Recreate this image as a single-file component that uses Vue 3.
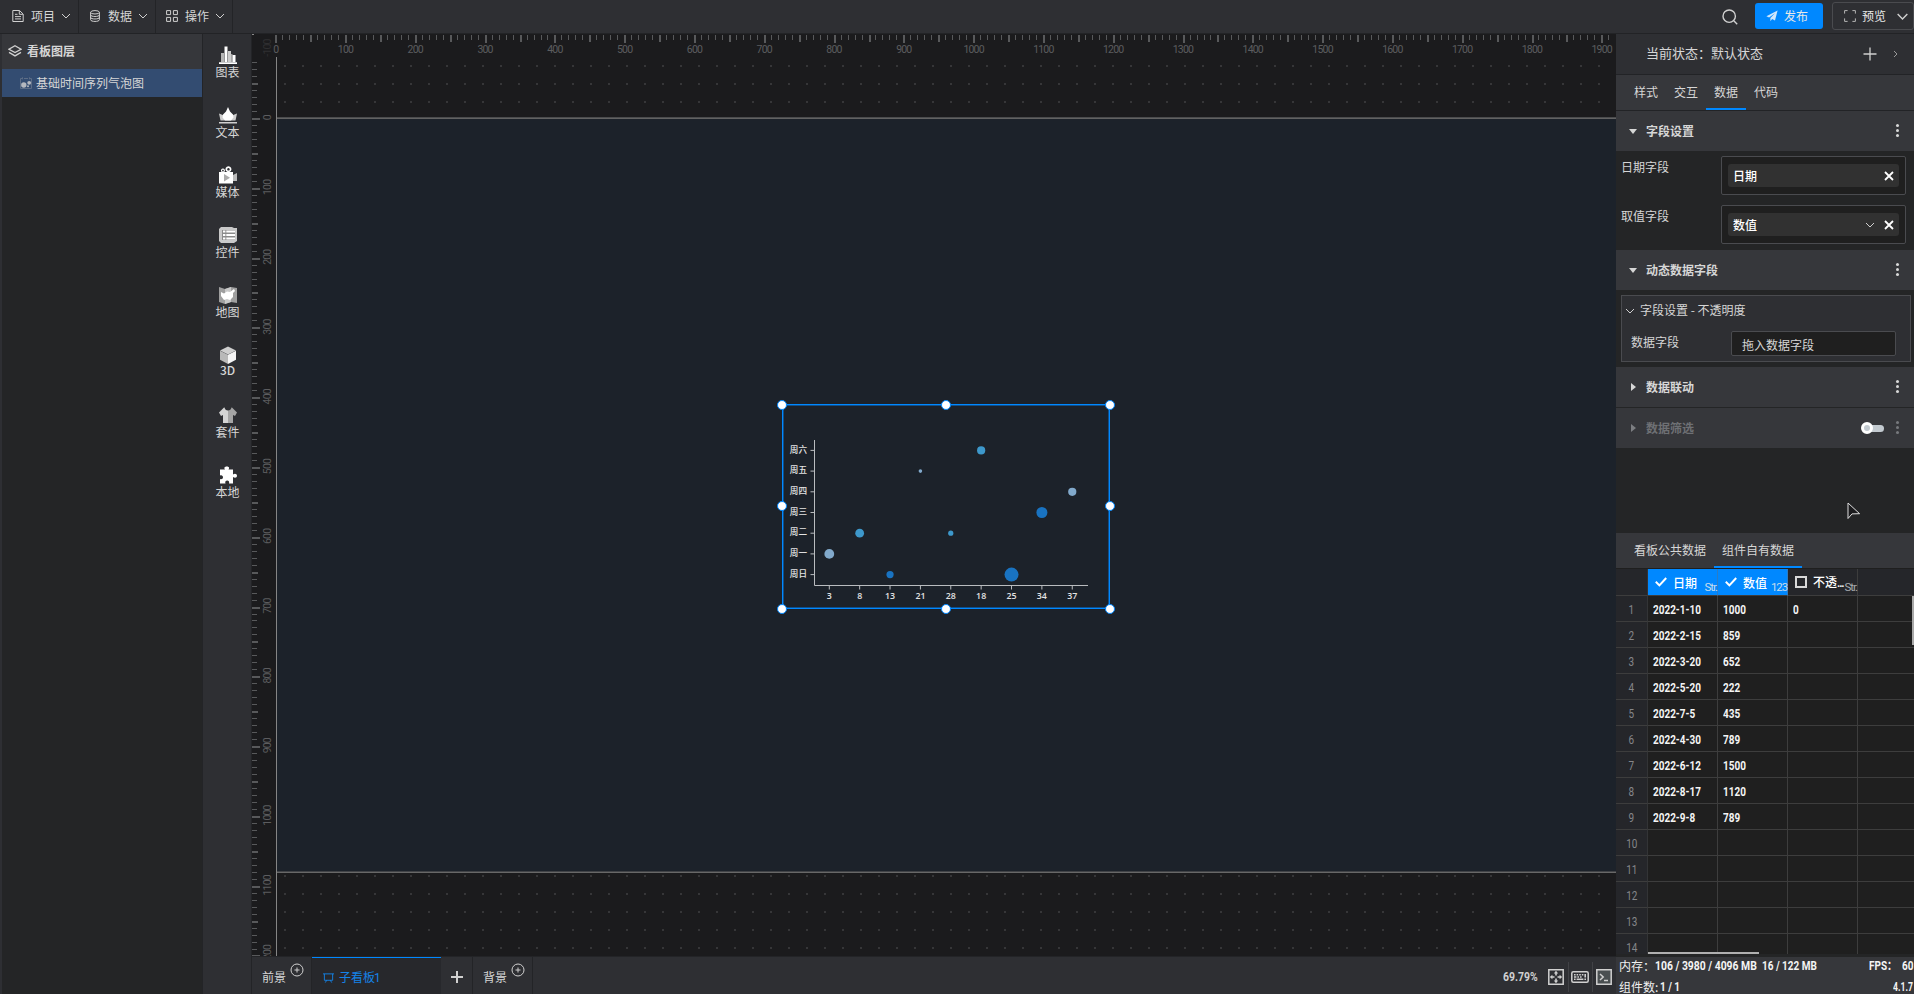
<template>
  <div class="editor">
    <header class="topbar">
      <div class="menu" v-for="m in menus" :key="m.label">
        <svg class="menu-icon" viewBox="0 0 12 12">
          <template v-if="m.icon === 'file'">
            <path d="M.8.5h6.7l3.7 3.6v7.4H.8z M7.3.7v3.6h3.6 M3 4.3h2.5 M3 6.6h6 M3 8.9h6" />
          </template>
          <template v-else-if="m.icon === 'db'">
            <ellipse cx="6" cy="2.3" rx="4.4" ry="1.7" />
            <path d="M1.6 2.3v7.4c0 2.3 8.8 2.3 8.8 0V2.3 M1.6 4.9c0 2.1 8.8 2.1 8.8 0 M1.6 7.4c0 2.1 8.8 2.1 8.8 0" />
          </template>
          <template v-else>
            <path d="M.6.6h4v4h-4z M7.4.6h4v4h-4z M.6 7.4h4v4h-4z M7.4 7.4h4v4h-4z" />
          </template>
        </svg>
        <span>{{ m.label }}</span>
        <svg class="chev" viewBox="0 0 10 6"><path d="M1 1l4 4 4-4" /></svg>
      </div>
      <div class="top-right">
        <svg class="search" viewBox="0 0 16 16"><circle cx="7.2" cy="7.2" r="6.2" /><path d="M11.8 11.8l3.4 3.4" /></svg>
        <button class="publish">
          <svg viewBox="0 0 12 12"><path d="M11.6.4L.4 6.2l2.7 1.3L8.9 3.2 4.4 8v3.3l1.7-2.2 2.9 1.3z" /></svg>
          发布
        </button>
        <button class="preview">
          <svg class="frame" viewBox="0 0 12 12"><path d="M.6 3.6v-3h3 M8.4.6h3v3 M11.4 8.4v3h-3 M3.6 11.4h-3v-3" /></svg>
          <span>预览</span>
          <svg class="chev big" viewBox="0 0 10 6"><path d="M.6.8L5 5.2 9.4.8" /></svg>
        </button>
      </div>
    </header>

    <div class="main">
      <aside class="layers">
        <div class="layers-title">
          <svg viewBox="0 0 14 12"><path d="M7 .8l6 3.4-6 3.4-6-3.4z M1 7.4l6 3.5 6-3.5" /></svg>
          看板图层
        </div>
        <div class="layer-row">
          <svg viewBox="0 0 12 12">
            <path class="dim" d="M.5 11.5V1.5H2 M4 1.5h4 M10 1.5h1.5v10H.5 M2.5.3v2 M9.5.3v2" />
            <circle cx="3.8" cy="8" r="2.7" /><circle cx="9.2" cy="5.8" r="1.9" /><circle cx="8" cy="9.3" r="1" />
          </svg>
          基础时间序列气泡图
        </div>
      </aside>

      <nav class="tools">
        <div class="tool" v-for="t in tools" :key="t.label" :class="{ latin: t.label === '3D' }">
          <svg viewBox="0 0 18 18">
            <path v-for="(p, i) in t.paths" :key="i" :d="p[1]" :fill="p[0]" />
          </svg>
          <span>{{ t.label }}</span>
        </div>
      </nav>

      <section class="center">
        <div class="canvas">
          <svg class="stage" width="1364" height="923">
            <defs>
              <pattern id="dots" x="32" y="31" width="18" height="18" patternUnits="userSpaceOnUse">
                <rect width="2" height="2" fill="#363638" />
              </pattern>
            </defs>
            <rect x="25" y="23" width="1339" height="900" fill="url(#dots)" />
            <rect x="25" y="84" width="1339" height="754" fill="#1c222a" />
            <rect x="24" y="83" width="1340" height="1" fill="#4a4b4d" />
            <rect x="24" y="84" width="1340" height="1" fill="#626262" />
            <rect x="24" y="837" width="1340" height="1" fill="#414347" />
            <rect x="24" y="838" width="1340" height="1" fill="#686868" />
            <rect x="24" y="23" width="1" height="900" fill="#858585" />
            <rect
              v-for="t in hTicks" :key="'h' + t.n"
              :x="t.pos" y="1" :width="t.w" :height="t.len" fill="#58595b"
            />
            <rect
              v-for="t in vTicks" :key="'v' + t.n"
              x="0" :y="t.pos" :width="t.len" :height="t.w" fill="#58595b"
            />
            <text v-for="n in hLabels" :key="'hl' + n" class="rule" :x="23.7 + n * 0.6979" y="19">{{ n }}</text>
            <text
              v-for="n in vLabels" :key="'vl' + n" class="rule"
              :transform="`translate(18.5 ${83.6 + n * 0.6979}) rotate(-90)`"
            >{{ n }}</text>
            <text class="rule faint" transform="translate(18.5 14) rotate(-90)">-100</text>
            <rect x="0" y="-1" width="2" height="2" fill="#8a8a8a" />
          </svg>

          <div class="widget">
            <svg class="chart" width="328" height="205">
              <path class="axis" d="M32.5 36V181.5H306" />
              <g v-for="(d, i) in weekdays" :key="d">
                <path class="axis" :d="`M28.5 ${dayY(i)}h4`" />
                <text class="day" x="25" :y="dayY(i) + 2.2">{{ d }}</text>
              </g>
              <g v-for="(b, i) in bubbles" :key="i">
                <path class="axis" :d="`M${bubbleX(i)} 181.5v4`" />
                <text class="num" :x="bubbleX(i)" y="194.6">{{ b.label }}</text>
                <circle :cx="bubbleX(i)" :cy="dayY(b.day)" :r="b.r" :fill="b.color" />
              </g>
            </svg>
            <i v-for="h in handles" :key="h" class="handle" :class="h"></i>
          </div>
        </div>

        <footer class="boards">
          <div class="board-cell">前景<svg class="add" viewBox="0 0 14 14"><circle cx="7" cy="7" r="6" /><path d="M7 4.5v5M4.5 7h5" /></svg></div>
          <div class="board-tab">
            <svg viewBox="0 0 12 12"><path d="M0 1.5h12 M1.5 1.5v7h9v-7 M4 8.5l-1.5 2.5 M8 8.5l1.5 2.5" /></svg>
            <span>子看板<span class="one">1</span></span>
          </div>
          <div class="board-plus"><svg viewBox="0 0 12 12"><path d="M6 0v12M0 6h12" /></svg></div>
          <div class="board-cell">背景<svg class="add" viewBox="0 0 14 14"><circle cx="7" cy="7" r="6" /><path d="M7 4.5v5M4.5 7h5" /></svg></div>
          <div class="zoom">
            <span class="din pct">69.79%</span>
            <span class="zoom-btn first">
              <svg width="16" height="16" viewBox="0 0 16 16">
                <path class="ln" d="M.8.8h14.4v14.4H.8z" />
                <path class="fl" d="M8 1.8l2.2 2.6H8.8v2.1H7.2V4.4H5.8z M8 14.2l2.2-2.6H8.8V9.5H7.2v2.1H5.8z M1.8 8l2.6-2.2v1.4h2.1v1.6H4.4v1.4z M14.2 8l-2.6-2.2v1.4H9.5v1.6h2.1v1.4z" />
              </svg>
            </span>
            <span class="zoom-btn">
              <svg width="18" height="12" viewBox="0 0 18 12">
                <rect class="ln" x=".8" y=".8" width="16.4" height="10.4" rx="1.5" />
                <path class="fl" d="M3 3h1.6v1.6H3z M5.6 3h1.6v1.6H5.6z M8.2 3h1.6v1.6H8.2z M10.8 3h1.6v1.6h-1.6z M13.4 3H15v3.6h-1.6z M3 5.3h2.4v1.4H3z M6.4 5.3H8v1.4H6.4z M9 5.3h1.6v1.4H9z M3 7.6h1.6V9H3z M5.6 7.6h6.8V9H5.6z M13.4 7.6H15V9h-1.6z" />
              </svg>
            </span>
            <span class="zoom-btn">
              <svg width="16" height="16" viewBox="0 0 16 16">
                <path class="ln filled" d="M.8.8h14.4v14.4H.8z" /><path class="ln" d="M4 5l3.2 3L4 11 M8 11.5h4" />
              </svg>
            </span>
          </div>
        </footer>
      </section>

      <aside class="props">
        <div class="state">
          <span>当前状态：默认状态</span>
          <svg class="plus" viewBox="0 0 14 14"><path d="M7 .5v13M.5 7h13" /></svg>
          <svg class="arrow" viewBox="0 0 5 8"><path d="M1 1l3 3-3 3" /></svg>
        </div>
        <div class="tabs">
          <span v-for="t in tabs" :key="t" class="tab" :class="{ active: t === '数据' }">{{ t }}</span>
        </div>

        <div class="group"><i class="tri down"></i>字段设置<i class="more"></i></div>
        <div class="fields">
          <div class="field">
            <label>日期字段</label>
            <div class="drop"><div class="chip">日期<svg class="x" viewBox="0 0 10 10"><path d="M1 1l8 8M9 1L1 9" /></svg></div></div>
          </div>
          <div class="field">
            <label>取值字段</label>
            <div class="drop"><div class="chip">数值<svg class="chev" viewBox="0 0 10 6"><path d="M1 1l4 4 4-4" /></svg><svg class="x" viewBox="0 0 10 10"><path d="M1 1l8 8M9 1L1 9" /></svg></div></div>
          </div>
        </div>

        <div class="group"><i class="tri down"></i>动态数据字段<i class="more"></i></div>
        <div class="dynamic">
          <div class="dyn-box">
            <div class="dyn-title"><svg class="chev" viewBox="0 0 10 6"><path d="M1 1l4 4 4-4" /></svg>字段设置 - 不透明度</div>
            <div class="dyn-row"><label>数据字段</label><div class="dyn-input">拖入数据字段</div></div>
          </div>
        </div>

        <div class="group"><i class="tri"></i>数据联动<i class="more"></i></div>
        <div class="group off"><i class="tri"></i>数据筛选<i class="switch"></i><i class="more"></i></div>
        <div class="blank"></div>

        <div class="data-tabs">
          <span>看板公共数据</span>
          <span class="active">组件自有数据</span>
        </div>
        <div class="sheet">
          <div class="sheet-head">
            <div class="idx"></div>
            <div class="col on"><svg class="check" viewBox="0 0 12 10"><path d="M.8 4.8l3.6 3.6L11.2 1" /></svg><b>日期</b><em>Str.</em></div>
            <div class="col on"><svg class="check" viewBox="0 0 12 10"><path d="M.8 4.8l3.6 3.6L11.2 1" /></svg><b>数值</b><em>123</em></div>
            <div class="col"><i class="box"></i><b>不透<span class="dots">...</span></b><em>Str.</em></div>
            <div class="rest"></div>
          </div>
          <div class="sheet-row" v-for="(r, i) in rows" :key="i">
            <div class="idx"><span class="din thin">{{ i + 1 }}</span></div>
            <div class="col" v-for="c in 3" :key="c"><span class="din">{{ r[c - 1] }}</span></div>
            <div class="rest"></div>
          </div>
          <div class="bar-v"></div>
          <div class="bar-h"></div>
        </div>
        <div class="status">
          <div class="status-line">
            <span>内存：</span><span class="din mem">106 / 3980 / 4096 MB</span><span class="din mem2">16 / 122 MB</span>
            <span class="right"><span class="din fps">FPS：</span><span class="din sixty">60</span></span>
          </div>
          <div class="status-line">
            <span>组件数:</span><span class="din cnt">1 / 1</span>
            <span class="right"><span class="din ver">4.1.7</span></span>
          </div>
        </div>
      </aside>
    </div>

    <svg class="cursor" viewBox="0 0 14 18"><path d="M1 1v15.5l4-4.6 7.6-.2z" /></svg>
  </div>
</template>

<script setup>
const menus = [
  { label: '项目', icon: 'file' },
  { label: '数据', icon: 'db' },
  { label: '操作', icon: 'grid' },
]

const tabs = ['样式', '交互', '数据', '代码']

const tools = [
  { label: '图表', paths: [['#b5b5b5', 'M2 7h3v9H2z'], ['#fff', 'M5.5.5h3V16h-3z'], ['#ccc', 'M9 5h3v11H9z'], ['#a5a5a5', 'M12 8h1.5v8H12z'], ['#fff', 'M13.5 9h3v7h-3z M0 16.300h18V18H0z']] },
  { label: '文本', paths: [['#cfcfcf', 'M0 7.5l5 2h8l5-2-1.5 7h-15z M0 16h18v1.5H0z'], ['#fff', 'M9 1l2 4.5 3 3 .5 3-2.500 3H6l-2.5-3 .5-3 3-3z']] },
  { label: '媒体', paths: [['#bbb', 'M14 9l4-2v8h-4z'], ['#fff', 'M9.5.2a3 3 0 1 1-.1 0z M4 2.5a2 2 0 1 1-.1 0z M0 6h14v11.5H0z'], ['#2e2f33', 'M9.5 2a1.3 1.3 0 1 1-.1 0z M4 3.7a.8.8 0 1 1-.1 0z'], ['#aaa', 'M5 8l6 3.7-6 3.8z']] },
  { label: '控件', paths: [['#c9c9c9', 'M2 1h11l2 1h3v13l-3 2H2l-2-2V3z'], ['#8b8b8b', 'M3 4h13v10H3z'], ['#fff', 'M4 4.5h2.4v2H4z M7.3 4.5H16v2H7.3z M4 8h2.4v2H4z M7.3 8H16v2H7.3z M4 11.5h2.4v2H4z M7.3 11.5H16v2H7.3z']] },
  { label: '地图', paths: [['#9f9f9f', 'M0 1l6 2 6-2 6 1v15l-6-1-6 2-6-2z'], ['#c8c8c8', 'M6 3l6-2v15l-6 2z'], ['#fff', 'M2 6l3 1.5 3-2 3 .5 4-3 1 2-2 2v4l-3 3-3-1-3 1-3-4z']] },
  { label: '3D', paths: [['#cfcfcf', 'M9 .5l8 4-8 4-8-4z'], ['#f5f5f5', 'M9 8.8l8-4.1v9l-8 4.3z'], ['#b9b9b9', 'M1 4.7l8 4.1V18l-8-4.3z']] },
  { label: '套件', paths: [['#d4d4d4', 'M5 1.5L0 6.5l2 3.5 2-1v8h5V4.5C7 4.5 6 3.5 5.5 1.5z'], ['#a5a5a5', 'M13 1.5l5 5-2 3.5-2-1v8H9V4.5c2 0 3-1 3.5-3z']] },
  { label: '本地', paths: [['#fff', 'M1 3.5h5C4.5 1.5 6 .5 7.8.5s3.2 1 1.7 3H14v5c2-1.3 4-.5 4 1.3s-2 2.7-4 1.2v6.5h-4c.7-2-.5-3-1.8-3s-2.5 1-1.7 3H1V13c1.8.8 3-.5 3-1.8S2.8 8.6 1 9.5z']] },
]

// 1 board unit = 0.6979px at the current zoom
const STEP = 6.979
const tick = (n, zero) => ({
  n,
  pos: Math.round(zero + n * STEP),
  len: n % 10 === 0 ? 8 : n % 5 === 0 ? 7 : 5,
  w: n % 5 === 0 ? 2 : 1,
})
const hTicks = Array.from({ length: 192 }, (_, n) => tick(n, 23.3))
const vTicks = Array.from({ length: 129 }, (_, i) => tick(i - 8, 84)).map(t => ({
  ...t,
  len: t.n % 10 === 0 ? 8 : t.n % 5 === 0 ? 6 : 5,
}))
const hLabels = Array.from({ length: 20 }, (_, i) => i * 100)
const vLabels = Array.from({ length: 13 }, (_, i) => i * 100)

const weekdays = ['周六', '周五', '周四', '周三', '周二', '周一', '周日']
const bubbles = [
  { label: '3', day: 5, r: 4.9, color: '#81a9cb' },
  { label: '8', day: 4, r: 4.4, color: '#3d98cb' },
  { label: '13', day: 6, r: 3.6, color: '#1973c1' },
  { label: '21', day: 1, r: 1.8, color: '#81a9cb' },
  { label: '28', day: 4, r: 2.6, color: '#3d98cb' },
  { label: '18', day: 0, r: 4.1, color: '#3d98cb' },
  { label: '25', day: 6, r: 7, color: '#1973c1' },
  { label: '34', day: 3, r: 5.5, color: '#1973c1' },
  { label: '37', day: 2, r: 4.1, color: '#81a9cb' },
]
const dayY = i => 46.4 + i * 20.7
const bubbleX = i => 47.3 + i * 30.37
const handles = ['tl', 'tm', 'tr', 'ml', 'mr', 'bl', 'bm', 'br']

const rows = [
  ['2022-1-10', '1000', '0'],
  ['2022-2-15', '859'],
  ['2022-3-20', '652'],
  ['2022-5-20', '222'],
  ['2022-7-5', '435'],
  ['2022-4-30', '789'],
  ['2022-6-12', '1500'],
  ['2022-8-17', '1120'],
  ['2022-9-8', '789'],
  [], [], [], [], [],
]
</script>

<style>
body {
  background: #242526;
  overflow: hidden;
}
</style>

<style scoped>
.editor {
  width: 1914px;
  height: 994px;
  position: relative;
  overflow: hidden;
  display: flex;
  flex-direction: column;
  background: #2e2f33;
  color: #d6d6d6;
  font: 12px/18px "Noto Sans CJK SC", sans-serif;
}

.editor *,
.editor *::before {
  box-sizing: border-box;
}

svg {
  display: block;
  flex: none;
  fill: none;
  stroke: #d0d0d0;
}

i,
em {
  font-style: normal;
}

.din {
  display: inline-block;
  font-family: Roboto, "Noto Sans CJK SC", sans-serif;
  font-weight: 700;
  color: #f4f4f4;
  transform: scaleX(0.83);
  transform-origin: 0 50%;
  white-space: nowrap;
}

.chev {
  width: 10px;
  height: 6px;
}

/* top bar */
.topbar {
  height: 34px;
  display: flex;
  border-bottom: 1px solid #222326;
}

.menu {
  width: 77px;
  height: 33px;
  padding: 0 0 2px 10px;
  display: flex;
  align-items: center;
  border-right: 1px solid #232427;
}

.menu:first-child {
  width: 79px;
  padding-left: 12px;
}

.menu-icon {
  width: 12px;
  height: 12px;
  margin-right: 7px;
}

.menu span {
  width: 24px;
  margin-right: 6px;
}

.top-right {
  margin-left: auto;
  display: flex;
  align-items: flex-start;
}

.search {
  width: 16px;
  height: 16px;
  margin: 9px 17px 0 0;
  stroke-width: 1.4;
}

button {
  display: flex;
  align-items: center;
  font: inherit;
  color: #e8e8e8;
  padding: 0;
}

.publish {
  width: 68px;
  height: 26px;
  margin-top: 3px;
  padding-left: 11px;
  border: 0;
  border-radius: 3px;
  background: #0088ff;
}

.publish svg {
  width: 12px;
  height: 12px;
  margin-right: 6px;
  fill: #cfe6fb;
  stroke: none;
}

.preview {
  width: 82px;
  height: 28px;
  margin: 2px 0 0 9px;
  padding-left: 11px;
  background: none;
  border: 1px solid #4a4b4f;
  border-radius: 3px;
}

.frame {
  width: 12px;
  height: 12px;
  margin-right: 6px;
  stroke: #b5b5b5;
}

.chev.big {
  width: 11px;
  height: 7px;
  margin-left: 11px;
  stroke-width: 1.3;
}

.main {
  flex: 1;
  min-height: 0;
  display: flex;
}

/* layer list */
.layers {
  width: 200px;
  margin-left: 2px;
  background: #242526;
}

.layers-title {
  height: 35px;
  padding: 0 0 1px 6px;
  display: flex;
  align-items: center;
  background: #36373b;
  font-weight: 700;
}

.layers-title svg {
  width: 14px;
  height: 12px;
  margin-right: 5px;
  stroke-width: 1.3;
}

.layer-row {
  height: 28px;
  padding-left: 18px;
  display: flex;
  align-items: center;
  background: #334c71;
}

.layer-row svg {
  width: 12px;
  height: 12px;
  margin-right: 4px;
  fill: #b4b8bf;
  stroke: none;
}

.layer-row .dim {
  fill: none;
  stroke: #5c6d86;
}

/* component toolbar */
.tools {
  width: 50px;
  padding: 12px 0 0 1px;
  border-left: 1px solid #232427;
  border-right: 1px solid #232427;
}

.tool {
  height: 60px;
  display: flex;
  flex-direction: column;
  align-items: center;
}

.tool svg {
  width: 18px;
  height: 18px;
  stroke: none;
}

.tool span {
  line-height: 15px;
}

.tool.latin span {
  line-height: 12px;
  font-weight: 500;
}

/* canvas */
.center {
  width: 1364px;
  display: flex;
  flex-direction: column;
}

.canvas {
  position: relative;
  height: 922px;
  overflow: hidden;
  background: #1b1b1d;
}

.stage {
  stroke: none;
  overflow: visible;
}

.rule {
  font: 10.5px Roboto, sans-serif;
  letter-spacing: -0.8px;
  fill: #5c5d5f;
  text-anchor: middle;
}

.rule.faint {
  fill: #2f2f31;
}

.widget {
  position: absolute;
  left: 530px;
  top: 370px;
  width: 328px;
  height: 205px;
}

.widget::before {
  content: "";
  position: absolute;
  inset: 0;
  border: 1px solid #0088ff;
  outline: 1px solid rgba(0, 136, 255, 0.45);
  outline-offset: -2px;
}

.axis {
  stroke: #b9bcbf;
}

.chart text {
  stroke: none;
  fill: #e4e4e4;
}

.day {
  font-size: 8.6px;
  font-weight: 500;
  text-anchor: end;
}

.num {
  font: 8.8px "Open Sans", sans-serif;
  font-weight: 600;
  text-anchor: middle;
}

.chart circle {
  stroke: none;
}

.handle {
  position: absolute;
  width: 10px;
  height: 10px;
  margin: -5px 0 0 -5px;
  border-radius: 50%;
  background: #fff;
  border: 1.5px solid #0088ff;
}

.tl, .tm, .tr { top: 0.5px; }
.ml, .mr { top: 102.4px; }
.bl, .bm, .br { top: 204.5px; }
.tl, .ml, .bl { left: 0.4px; }
.tm, .bm { left: 164px; }
.tr, .mr, .br { left: 327.5px; }

/* board tabs */
.boards {
  flex: 1;
  display: flex;
  border-top: 1px solid #232427;
}

.board-cell {
  width: 60px;
  padding: 11px 0 0 10px;
  display: flex;
  border-right: 1px solid #232427;
}

.add {
  width: 14px;
  height: 14px;
  margin: -5px 0 0 4px;
}

.board-tab {
  width: 129px;
  padding: 3px 0 0 11px;
  display: flex;
  align-items: center;
  background: #27282c;
  border-top: 1px solid #0088ff;
  color: #1583e8;
}

.board-tab svg {
  width: 11px;
  height: 12px;
  margin-right: 5px;
  stroke: #1583e8;
}

.one {
  font-family: Roboto, sans-serif;
  margin-left: -1px;
}

.board-plus {
  width: 32px;
  padding: 14px 0 0 10px;
  border-right: 1px solid #232427;
}

.board-plus svg {
  width: 12px;
  height: 12px;
  stroke-width: 2;
}

.zoom {
  margin-left: auto;
  padding: 4px 0 0 0;
  display: flex;
  height: 36px;
  align-items: center;
}

.pct {
  width: 45px;
  font-size: 12px;
  color: #d0d0d0;
  transform: scaleX(0.87);
}

.zoom-btn {
  width: 24px;
  height: 30px;
  padding-left: 3px;
  display: flex;
  align-items: center;
  border-left: 1px solid #414246;
}

.zoom-btn.first {
  width: 20px;
  padding-left: 0;
  border: 0;
}

.zoom-btn:nth-child(3) {
  padding-left: 2px;
}

.zoom-btn .ln {
  stroke-width: 1.5;
}

.zoom-btn .filled {
  fill: #4a4f51;
}

.zoom-btn .fl {
  fill: #d0d0d0;
  stroke: none;
}

/* property panel */
.props {
  width: 298px;
  display: flex;
  flex-direction: column;
  background: #242526;
}

.props > div {
  flex: none;
}

.state {
  height: 40px;
  padding: 0 0 1px 30px;
  display: flex;
  align-items: center;
  background: #2e2f33;
  font-size: 13px;
}

.state span {
  margin-top: -1px;
}

.plus {
  width: 14px;
  height: 14px;
  margin-left: 100px;
  stroke-width: 1.3;
}

.arrow {
  width: 5px;
  height: 8px;
  margin-left: 16px;
  stroke: #9a9a9a;
}

.tabs {
  height: 37px;
  padding-left: 10px;
  display: flex;
  background: #36373b;
  border-top: 1px solid #222326;
  border-bottom: 1px solid #222326;
}

.tab {
  width: 40px;
  padding-top: 8px;
  text-align: center;
}

.tab.active {
  border-bottom: 2px solid #0088ff;
}

.group {
  height: 40px;
  padding: 0 14px 1px 13px;
  display: flex;
  align-items: center;
  background: #36373b;
  font-weight: 700;
}

.tri {
  width: 0;
  height: 0;
  margin: 0 10px 0 2px;
  border: 4px solid transparent;
  border-left: 5px solid #d6d6d6;
  border-right: 0;
}

.tri.down {
  margin: 2px 9px 0 0;
  border: 4px solid transparent;
  border-top: 5px solid #d6d6d6;
  border-bottom: 0;
}

.more {
  width: 3px;
  height: 3px;
  margin-left: auto;
  margin-right: 1px;
  border-radius: 50%;
  background: #d8d8d8;
  box-shadow: 0 -5px #d8d8d8, 0 5px #d8d8d8;
}

.group.off {
  height: 41px;
  border-top: 1px solid #242526;
  color: #6e7074;
}

.off .tri {
  border-left-color: #7c7e82;
}

.off .more {
  margin-left: 12px;
  background: #77797d;
  box-shadow: 0 -5px #77797d, 0 5px #77797d;
}

.switch {
  position: relative;
  width: 22px;
  height: 7px;
  margin: 1px 0 0 auto;
  border-radius: 4px;
  background: #c3cad0;
}

.switch::before {
  content: "";
  position: absolute;
  left: -1px;
  top: -3px;
  width: 12px;
  height: 12px;
  border-radius: 50%;
  background: #c3cad0;
  border: 3px solid #fff;
}

.fields {
  height: 99px;
  padding: 5px 8px 0 5px;
}

.field {
  display: flex;
  justify-content: space-between;
  height: 49px;
}

.field label {
  padding-top: 2px;
}

.drop {
  width: 185px;
  height: 39px;
  padding: 7px 6px;
  border: 1px solid #4a4b4f;
  border-radius: 2px;
  background: #1f1f1f;
}

.chip {
  height: 23px;
  padding: 0 5px;
  display: flex;
  align-items: center;
  border-radius: 3px;
  background: #313131;
  color: #fff;
  font-weight: 500;
}

.x {
  width: 10px;
  height: 10px;
  margin-top: 1px;
  margin-left: auto;
  stroke: #fff;
  stroke-width: 1.8;
}

.chip .chev {
  margin-left: auto;
  margin-right: 9px;
}

.chip .chev + .x {
  margin-left: 0;
}

.dynamic {
  height: 77px;
  padding: 5px 3px 0 5px;
}

.dyn-box {
  height: 67px;
  background: #2e2f33;
  border: 1px solid #4a4b4f;
}

.dyn-title {
  padding: 5px 0 0 3px;
  height: 35px;
  display: flex;
}

.dyn-title .chev {
  margin: 7px 5px 0 0;
}

.dyn-row {
  display: flex;
  justify-content: space-between;
  padding: 0 14px 0 9px;
}

.dyn-row label {
  padding-top: 2px;
}

.dyn-input {
  width: 165px;
  height: 25px;
  padding-left: 10px;
  line-height: 25px;
  border: 1px solid #4a4b4f;
  border-radius: 2px;
  background: #1f1f1f;
}

.blank {
  height: 85px;
}

.data-tabs {
  height: 35px;
  padding-left: 10px;
  display: flex;
  background: #36373b;
}

.data-tabs span {
  width: 88px;
  padding: 8px 0 0 8px;
}

.data-tabs .active {
  border-bottom: 2px solid #0088ff;
}

.sheet {
  position: relative;
  height: 386px;
  overflow: hidden;
  background: #1f1f1f;
}

.sheet-head,
.sheet-row {
  display: flex;
  height: 26px;
}

.sheet-head {
  height: 28px;
  padding-top: 1px;
}

.sheet-head > div,
.sheet-row > div {
  display: flex;
  align-items: center;
  border-bottom: 1px solid #3d3d3d;
}

.sheet-row .din {
  margin-top: 3px;
}

.sheet-head > div {
  background: #25262a;
}

.sheet-head > .idx,
.sheet-row > .idx {
  width: 32px;
  justify-content: center;
  background: #25262a;
  border-right: 1px solid #333436;
}

.idx .thin {
  transform-origin: 50% 50%;
  font-weight: 400;
  color: #85868a;
}

.col {
  width: 70px;
  border-right: 1px solid #3d3d3d;
  padding-left: 5px;
  color: #fff;
  white-space: nowrap;
}

.sheet-head .col {
  padding-left: 7px;
}

.sheet-head .col.on {
  background: #0088ff;
  border-right-color: #2b7cc4;
}

.check {
  width: 12px;
  height: 10px;
  margin-right: 6px;
  stroke: #fff;
  stroke-width: 2;
}

.box {
  flex: none;
  width: 12px;
  height: 12px;
  margin-right: 6px;
  border: 2px solid #d8d8d8;
}

.sheet-head b {
  padding-top: 1px;
  font-weight: 500;
}

.dots {
  font-family: Roboto, sans-serif;
  letter-spacing: -1.2px;
}

.sheet-head em {
  margin: 9px 0 0 auto;
  font: 11.5px Roboto, sans-serif;
  letter-spacing: -1.1px;
  color: #c9dcec;
}

.sheet-head .col:not(.on) em {
  color: #a9acb0;
}

.rest {
  flex: 1;
}

.bar-v {
  position: absolute;
  right: 0;
  top: 28px;
  width: 2px;
  height: 49px;
  background: #a9a9a9;
}

.bar-h {
  position: absolute;
  left: 32px;
  top: 384px;
  width: 111px;
  height: 2px;
  background: #b0b0b0;
}

.status {
  height: 40px;
  overflow: hidden;
  border-top: 3px solid #242526;
  background: #36373b;
  color: #f0f0f0;
}

.status-line {
  display: flex;
  height: 21px;
  padding-left: 3px;
}

.status-line > span:first-child {
  flex: none;
}

.mem {
  width: 107px;
  transform: scaleX(0.865);
}

.right {
  margin-left: auto;
  display: flex;
}

.fps {
  width: 33px;
}

.sixty {
  width: 12px;
}

.cnt {
  margin-left: 2px;
}

.ver {
  width: 21px;
  transform: scaleX(0.72);
}

.cursor {
  position: absolute;
  left: 1847px;
  top: 502px;
  width: 14px;
  height: 18px;
  fill: #1b1b1d;
  stroke: #e0e0e0;
}
</style>
